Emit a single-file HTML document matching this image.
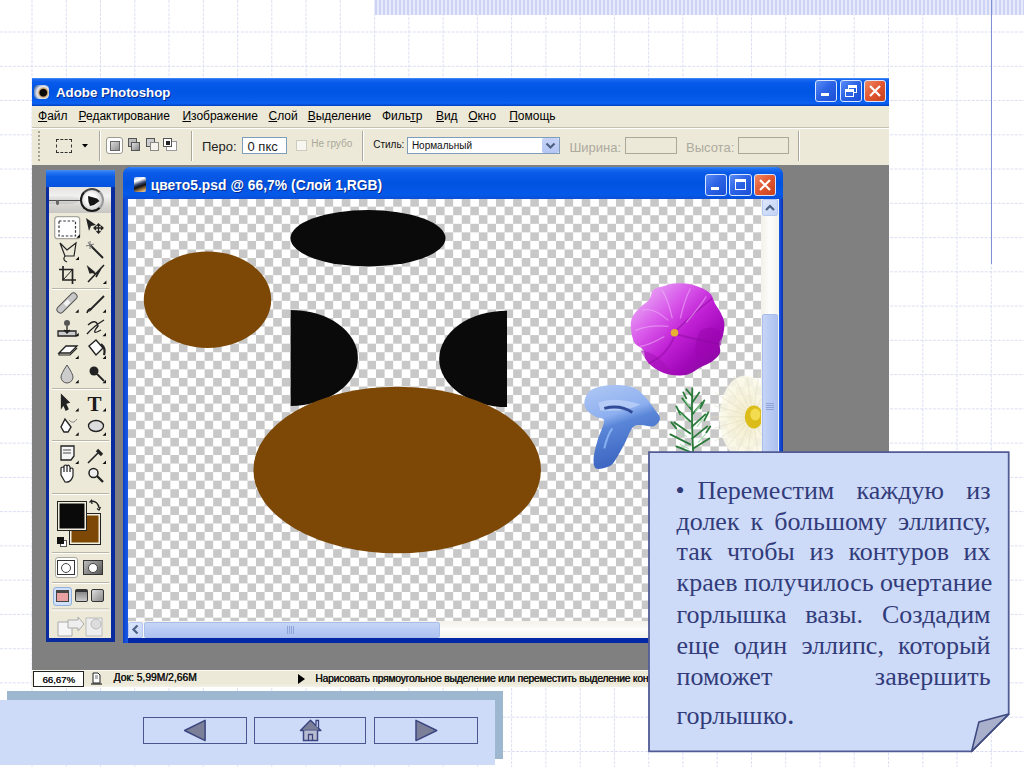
<!DOCTYPE html>
<html><head><meta charset="utf-8">
<style>
*{margin:0;padding:0;box-sizing:border-box}
html,body{width:1024px;height:767px;overflow:hidden;background:#fff;position:relative;font-family:"Liberation Sans",sans-serif}
.a{position:absolute}
.t{position:absolute;white-space:nowrap}
#grid line{stroke:#dcdff3;stroke-width:1;stroke-dasharray:3 1.3}
.mi{position:absolute;top:31.6px;font-size:12px;line-height:12px;color:#000;white-space:nowrap}
.mi u{text-decoration:underline;text-underline-offset:1px}
.xpb{position:absolute;width:22px;height:22px;border:1px solid #d8e6ff;border-radius:3px;background:linear-gradient(135deg,#5a8cf5 0%,#2d64e6 45%,#1a4fd6 100%)}
.xpc{background:linear-gradient(135deg,#f08a66 0%,#e0552f 50%,#c8421c 100%)}
.sep{position:absolute;width:1px;background:#aca899;border-right:1px solid #fff;width:2px}
</style></head><body>
<svg id="grid" class="a" style="left:0;top:0" width="1024" height="767">
<line x1="32.0" y1="0" x2="32.0" y2="767"/>
<line x1="66.3" y1="0" x2="66.3" y2="767"/>
<line x1="100.5" y1="0" x2="100.5" y2="767"/>
<line x1="134.8" y1="0" x2="134.8" y2="767"/>
<line x1="169.0" y1="0" x2="169.0" y2="767"/>
<line x1="203.3" y1="0" x2="203.3" y2="767"/>
<line x1="237.6" y1="0" x2="237.6" y2="767"/>
<line x1="271.8" y1="0" x2="271.8" y2="767"/>
<line x1="306.1" y1="0" x2="306.1" y2="767"/>
<line x1="340.3" y1="0" x2="340.3" y2="767"/>
<line x1="374.6" y1="0" x2="374.6" y2="767"/>
<line x1="408.9" y1="0" x2="408.9" y2="767"/>
<line x1="443.1" y1="0" x2="443.1" y2="767"/>
<line x1="477.4" y1="0" x2="477.4" y2="767"/>
<line x1="511.6" y1="0" x2="511.6" y2="767"/>
<line x1="545.9" y1="0" x2="545.9" y2="767"/>
<line x1="580.2" y1="0" x2="580.2" y2="767"/>
<line x1="614.4" y1="0" x2="614.4" y2="767"/>
<line x1="648.7" y1="0" x2="648.7" y2="767"/>
<line x1="682.9" y1="0" x2="682.9" y2="767"/>
<line x1="717.2" y1="0" x2="717.2" y2="767"/>
<line x1="751.5" y1="0" x2="751.5" y2="767"/>
<line x1="785.7" y1="0" x2="785.7" y2="767"/>
<line x1="820.0" y1="0" x2="820.0" y2="767"/>
<line x1="854.2" y1="0" x2="854.2" y2="767"/>
<line x1="888.5" y1="0" x2="888.5" y2="767"/>
<line x1="922.8" y1="0" x2="922.8" y2="767"/>
<line x1="957.0" y1="0" x2="957.0" y2="767"/>
<line x1="991.3" y1="0" x2="991.3" y2="767"/>
<line x1="0" y1="32.0" x2="1024" y2="32.0"/>
<line x1="0" y1="66.3" x2="1024" y2="66.3"/>
<line x1="0" y1="100.5" x2="1024" y2="100.5"/>
<line x1="0" y1="134.8" x2="1024" y2="134.8"/>
<line x1="0" y1="169.0" x2="1024" y2="169.0"/>
<line x1="0" y1="203.3" x2="1024" y2="203.3"/>
<line x1="0" y1="237.6" x2="1024" y2="237.6"/>
<line x1="0" y1="271.8" x2="1024" y2="271.8"/>
<line x1="0" y1="306.1" x2="1024" y2="306.1"/>
<line x1="0" y1="340.3" x2="1024" y2="340.3"/>
<line x1="0" y1="374.6" x2="1024" y2="374.6"/>
<line x1="0" y1="408.9" x2="1024" y2="408.9"/>
<line x1="0" y1="443.1" x2="1024" y2="443.1"/>
<line x1="0" y1="477.4" x2="1024" y2="477.4"/>
<line x1="0" y1="511.6" x2="1024" y2="511.6"/>
<line x1="0" y1="545.9" x2="1024" y2="545.9"/>
<line x1="0" y1="580.2" x2="1024" y2="580.2"/>
<line x1="0" y1="614.4" x2="1024" y2="614.4"/>
<line x1="0" y1="648.7" x2="1024" y2="648.7"/>
<line x1="0" y1="682.9" x2="1024" y2="682.9"/>
<line x1="0" y1="717.2" x2="1024" y2="717.2"/>
<line x1="0" y1="751.5" x2="1024" y2="751.5"/>
</svg>
<div class="a" id="band" style="left:374px;top:0;width:650px;height:15px;background:radial-gradient(circle,#c9d0f3 0.9px,transparent 1.4px) 0 0/4px 2.6px,#e7eafa"></div>
<div class="a" style="left:991.1px;top:0;width:1.3px;height:264px;background:#7f8fd4"></div>

<!-- Photoshop window -->
<div class="a" id="ps" style="left:32px;top:78px;width:857px;height:609.2px;background:#ece9d8">
  <div class="a" id="title" style="left:0;top:0;width:857px;height:28px;background:linear-gradient(#4a92f8 0,#1a68ee 1.5px,#0659ea 5px,#0055e4 50%,#075cec 82%,#0c62f2 90%,#0040c0 100%)">
    <div class="a" style="left:2.2px;top:6.6px;width:14.6px;height:14px;border-radius:30%;background:radial-gradient(circle at 62% 55%,#0a0a0a 0 28%,#c8a070 36%,#e8ecf4 52%,#8aa0c8 70%,#203060 100%)"></div>
    <div class="t" style="left:24px;top:8.2px;font:bold 13.3px/13px 'Liberation Sans',sans-serif;color:#fff;text-shadow:1px 1px 0 #0a2a8a;letter-spacing:0px">Adobe Photoshop</div>
    <div class="xpb" style="left:783px;top:2px"><div class="a" style="left:5px;top:12px;width:8px;height:3px;background:#fff"></div></div>
    <div class="xpb" style="left:808px;top:2px"><div class="a" style="left:7px;top:4px;width:9px;height:8px;border:1.5px solid #fff;border-top-width:3px"></div><div class="a" style="left:4px;top:8px;width:9px;height:8px;border:1.5px solid #fff;border-top-width:3px;background:#2d64e6"></div></div>
    <div class="xpb xpc" style="left:832px;top:2px"><svg class="a" style="left:3px;top:3px" width="14" height="14"><path d="M2 2L12 12M12 2L2 12" stroke="#fff" stroke-width="2.2"/></svg></div>
  </div>
  <div class="a" id="menubar" style="left:0;top:28px;width:857px;height:21.5px;background:#ece9d8;border-bottom:1px solid #c5c2b2"></div>
  <div class="mi" style="left:6px"><u>Ф</u>айл</div>
  <div class="mi" style="left:46.5px"><u>Р</u>едактирование</div>
  <div class="mi" style="left:150.4px"><u>И</u>зображение</div>
  <div class="mi" style="left:236.5px"><u>С</u>лой</div>
  <div class="mi" style="left:275.7px"><u>В</u>ыделение</div>
  <div class="mi" style="left:350px">Филь<u>т</u>р</div>
  <div class="mi" style="left:403.9px"><u>В</u>ид</div>
  <div class="mi" style="left:436.2px"><u>О</u>кно</div>
  <div class="mi" style="left:477.2px"><u>П</u>омощь</div>

  <div class="a" id="opts" style="left:0;top:50px;width:857px;height:37px;background:#ece9d8;border-top:1px solid #fff"></div>
  <!-- grip -->
  <div class="a" style="left:6px;top:53px;width:2px;height:32px;background:repeating-linear-gradient(#a5a28f 0 2px,transparent 2px 4px)"></div>
  <!-- marquee icon -->
  <div class="a" style="left:24px;top:60.5px;width:16px;height:14px;border:1.5px dashed #333"></div>
  <svg class="a" style="left:50px;top:65.5px" width="6" height="4"><path d="M0 0H6L3 3.5Z" fill="#000"/></svg>
  <div class="sep" style="left:67px;top:53px;height:30px"></div>
  <!-- mode buttons -->
  <div class="a" style="left:74px;top:58.7px;width:17px;height:17.5px;border:1px solid #9b9a90;border-radius:3px;background:#fff"></div>
  <div class="a" style="left:78px;top:62.5px;width:10px;height:10px;background:linear-gradient(135deg,#d8d8d8,#909090);border:1px solid #666"></div>
  <div class="a" style="left:95.5px;top:60px;width:9px;height:9px;background:#bbb;border:1px solid #555"></div>
  <div class="a" style="left:99px;top:64px;width:9px;height:9px;background:linear-gradient(135deg,#ddd,#888);border:1px solid #555"></div>
  <div class="a" style="left:114px;top:60px;width:9px;height:9px;background:#ccc;border:1px solid #555"></div>
  <div class="a" style="left:118px;top:64px;width:9px;height:9px;background:#f4f2ea;border:1px solid #888"></div>
  <div class="a" style="left:134px;top:63px;width:11px;height:10px;background:#fff;border:1px solid #999"></div>
  <div class="a" style="left:131px;top:60px;width:9px;height:9px;background:#fff;border:1px solid #555"></div>
  <div class="a" style="left:133.5px;top:62.5px;width:4px;height:4px;background:#222"></div>
  <div class="sep" style="left:159px;top:53px;height:30px"></div>
  <div class="t" style="left:170px;top:62px;font-size:13px;line-height:13px;color:#222">Перо:</div>
  <div class="a" style="left:210.3px;top:59.1px;width:44.5px;height:16.8px;background:#fff;border:1px solid #7f9db9"></div>
  <div class="t" style="left:215.5px;top:61.8px;font-size:13px;line-height:13px;color:#222">0 пкс</div>
  <div class="a" style="left:264.2px;top:62.2px;width:11px;height:10.5px;background:#f7f6f0;border:1px solid #cfccbe"></div>
  <div class="t" style="left:279.2px;top:61.3px;font-size:10px;line-height:10px;color:#aaa89a">Не грубо</div>
  <div class="sep" style="left:330px;top:53px;height:30px"></div>
  <div class="t" style="left:341.2px;top:62.2px;font-size:10px;line-height:10px;color:#111">Стиль:</div>
  <div class="a" style="left:375px;top:59.1px;width:153px;height:16.8px;background:#fff;border:1px solid #7f9db9"></div>
  <div class="t" style="left:379.9px;top:62.8px;font-size:10px;line-height:10px;color:#111">Нормальный</div>
  <div class="a" style="left:510px;top:60.3px;width:16.5px;height:14.5px;background:linear-gradient(#c6d3f7,#b5c6f4);border-radius:2px"></div>
  <svg class="a" style="left:513px;top:63.5px" width="11" height="8"><path d="M1.5 1.5L5.5 5.5L9.5 1.5" stroke="#4d6185" stroke-width="2.2" fill="none"/></svg>
  <div class="t" style="left:537.4px;top:63.3px;font-size:13px;line-height:13px;color:#adaa9f">Ширина:</div>
  <div class="a" style="left:593.2px;top:58.7px;width:51.5px;height:17px;border:1px solid #aaa89a"></div>
  <div class="t" style="left:654px;top:63.3px;font-size:13px;line-height:13px;color:#adaa9f">Высота:</div>
  <div class="a" style="left:706.1px;top:58.7px;width:51.1px;height:17px;border:1px solid #aaa89a"></div>
  <div class="sep" style="left:765.5px;top:53px;height:30px"></div>

  <div class="a" id="work" style="left:0;top:87px;width:857px;height:504.5px;background:#808080"></div>
  <div class="a" id="status" style="left:0;top:591.6px;width:857px;height:17.6px;background:linear-gradient(#faf9f2 0,#faf9f2 1px,#ece9d8 1.5px,#ece9d8 80%,#f3f1e6 100%)"></div>
  <div class="a" style="left:0.5px;top:592.8px;width:51px;height:16.5px;background:#fff;border:1.5px solid #222"></div>
  <div class="t" style="left:10.5px;top:597.3px;font-size:9.6px;line-height:10px;color:#111;text-shadow:0.2px 0 0 #111">66,67%</div>
  <div class="t" style="left:81.5px;top:595.1px;font-size:10.3px;line-height:10px;color:#111;text-shadow:0.35px 0 0 #111">Док: 5,99M/2,66M</div>
  <svg class="a" style="left:57px;top:594px" width="14" height="14"><path d="M4 1H9L11 3V11H4Z" fill="#fff" stroke="#222" stroke-width="1"/><path d="M2 12H13" stroke="#222" stroke-width="1.2"/><path d="M6 4H9M6 6H9" stroke="#444" stroke-width=".8"/></svg>
  <svg class="a" style="left:265.6px;top:596.4px" width="8" height="11"><path d="M0 0L7 5L0 10Z" fill="#000"/></svg>
  <div class="t" style="left:283.2px;top:595.5px;font-size:10.3px;line-height:10px;color:#111;text-shadow:0.35px 0 0 #111;letter-spacing:-0.22px">Нарисовать прямоугольное выделение или переместить выделение контура</div>
</div>

<!-- Toolbox -->
<div class="a" id="tools" style="left:46px;top:169.5px;width:68.6px;height:472.5px;background:#0a2b9e">
  <div class="a" style="left:0;top:0;width:68.6px;height:17.5px;background:linear-gradient(#4a90f6 0,#2a78f2 2px,#0a5ce8 40%,#0552de 100%)"></div>
  <div class="a" style="left:3.4px;top:17.5px;width:62px;height:451px;background:#ece9d8"></div>
  <!-- header image -->
  <div class="a" style="left:3.4px;top:17.5px;width:62px;height:25.5px;background:linear-gradient(180deg,#e4e2de,#f2f2f2 35%,#d8d6d2 70%,#c8c6c2);overflow:hidden">
    <div class="a" style="left:0;top:9px;width:30px;height:8px;background:linear-gradient(#e8e8e8,#bdbdbd);opacity:.7;border-radius:0 40% 40% 0"></div>
    <div class="a" style="left:0;top:12.5px;width:33px;height:1.2px;background:#505050"></div>
    <div class="a" style="left:7px;top:13px;width:3px;height:5px;background:#666;border-radius:40%"></div>
    <div class="a" style="left:30.5px;top:0.5px;width:24px;height:24px;border-radius:50%;border:2.4px solid #1a1a1a;border-right-color:#9a9a9a;border-top-color:#444;background:radial-gradient(circle at 45% 45%,#fafafa 0 35%,#c4c4c4 80%)"></div>
    <svg class="a" style="left:38px;top:7px" width="14" height="13"><path d="M1 2L10 4.5L12.5 7L7 11L3 12L1.5 8Z" fill="#141414"/></svg>
  </div>
</div>
<svg class="a" id="toolicons" style="left:46px;top:169.5px" width="69" height="473" fill="none" stroke="#222" stroke-width="1.3">
  <!-- separators (abs y minus 169.5) -->
  <path d="M6 118.5H63M6 218.5H63M6 270.5H63M6 323.5H63M6 382.5H63M6 412.5H63M6 439H63" stroke="#b9b6a6" stroke-width="1"/>
  <path d="M6 119.5H63M6 219.5H63M6 271.5H63M6 324.5H63M6 383.5H63M6 413.5H63M6 440H63" stroke="#fff" stroke-width="1"/>
  <!-- selected marquee button -->
  <rect x="8.7" y="46.7" width="25" height="22" rx="3" fill="#fff" stroke="#a8a79c"/>
  <rect x="13" y="51" width="16.5" height="15" stroke="#333" stroke-dasharray="2.5 1.8" stroke-width="1.2"/>
  <!-- move tool -->
  <path d="M40 48L50 55L45 56L43 61Z" fill="#222" stroke="none"/>
  <path d="M48 58H57M52.5 54V63M55 56L57 58L55 60M50 56L48 58L50 60M50.5 56L52.5 54L54.5 56M50.5 61L52.5 63L54.5 61" stroke-width="1.3"/>
  <!-- lasso -->
  <path d="M14 73L21 80L30 73L28 86L19 86Z" stroke-width="1.2"/>
  <path d="M19 86Q16 90 21 92" stroke-width="1.2"/>
  <!-- magic wand -->
  <path d="M44 75L57 88" stroke-width="2"/>
  <path d="M42 72L46 78M40 76L48 74M44 71V79" stroke="#777" stroke-width="1"/>
  <!-- crop -->
  <path d="M17 96V110H30M13 99.5H26.5V114" stroke-width="1.7"/>
  <path d="M17 110L27 99" stroke-width="1"/>
  <!-- slice -->
  <path d="M42 112L58 95M44 101L50 104M50 107L55 98" stroke-width="1.6"/>
  <path d="M42 97L48 102L44 103Z" fill="#222"/>
  <!-- healing -->
  <path d="M14.5 139.5L27.5 126.5" stroke="#555" stroke-width="8" stroke-linecap="round"/>
  <path d="M14.5 139.5L27.5 126.5" stroke="#c8c8c8" stroke-width="6" stroke-linecap="round"/>
  <path d="M19 135L23 131" stroke="#f4f4f4" stroke-width="4"/>
  <!-- brush -->
  <path d="M43 141L58 126" stroke-width="1.8"/>
  <path d="M41 143Q42 138 46 139" fill="#444" stroke-width="1.5"/>
  <!-- stamp -->
  <circle cx="21" cy="153" r="3" fill="#555" stroke="none"/>
  <path d="M21 156V160M12 161H30V166H12Z" fill="#ccc" stroke-width="1.3"/>
  <path d="M18 160L21 163L24 160" fill="#222"/>
  <!-- history brush -->
  <path d="M42 155Q50 148 52 156Q44 166 55 160M41 164Q48 156 58 150" stroke-width="1.4"/>
  <!-- eraser -->
  <path d="M13 183L20 176H31L24 183Z" fill="#fff" stroke-width="1.3"/>
  <path d="M13 183V185H24L31 178" stroke-width="1.1"/>
  <!-- bucket -->
  <path d="M43 176L50 170L57 178L50 185Z" fill="#fff" stroke-width="1.4"/>
  <path d="M55 174Q60 178 58 185" stroke-width="2.2"/>
  <!-- blur drop -->
  <path d="M21 195Q15 204 15 207A6 6 0 0 0 27 207Q27 204 21 195Z" fill="#ccc" stroke="#555" stroke-width="1"/>
  <!-- dodge -->
  <circle cx="48" cy="201" r="4.5" fill="#222" stroke="none"/>
  <path d="M51 204L58 211" stroke-width="1.8"/>
  <!-- path selection -->
  <path d="M15.5 225L23 232.5L19.5 233.5L22 239L20 240L17.5 234.5L15.5 237.5Z" fill="#222"/>
  <!-- type -->
  <text x="48.5" y="240.5" text-anchor="middle" font-family="Liberation Serif" font-size="21" font-weight="bold" fill="#1a1a1a" stroke="none">T</text>
  <!-- pen -->
  <path d="M19 249L15 257L18 262H22L25 257Z" fill="#fff" stroke-width="1.4"/>
  <path d="M23 250Q27 255 31 249" stroke-width="1" stroke="#888"/>
  <!-- ellipse -->
  <ellipse cx="50" cy="256" rx="7.5" ry="5.5" fill="#ddd" stroke-width="1.3"/>
  <!-- notes -->
  <path d="M15 276H28V286L25 290H15Z" fill="#f6f6f6" stroke-width="1.3"/>
  <path d="M17 280H25M17 283H25" stroke-width="0.8"/>
  <!-- eyedropper -->
  <path d="M42 293L52 283" stroke-width="1.6"/>
  <path d="M51 280L56 285" stroke-width="3.2"/>
  <!-- hand -->
  <path d="M15 305V298Q17 296 18 298V302V296Q20 294 21 296V302V296Q23 294 24 297V302V299Q26 297 27 299V306Q25 313 19 312Z" fill="#fff" stroke-width="1.2"/>
  <!-- zoom -->
  <circle cx="47.5" cy="303" r="4.5" fill="#eee" stroke-width="1.5"/>
  <path d="M51 306L57 312" stroke-width="2.4"/>
  <!-- small corner triangles -->
  <g fill="#111" stroke="none">
    <path d="M33.9 64.3V67.8H30.4ZM33.0 86.4V89.9H29.5ZM60.4 110.5V114.0H56.9ZM32.7 139.3V142.8H29.2ZM60.0 139.3V142.8H56.5ZM32.7 162.8V166.3H29.2ZM60.0 162.8V166.3H56.5ZM32.7 185.5V189.0H29.2ZM60.0 185.5V189.0H56.5ZM32.7 209.7V213.2H29.2ZM60.0 209.7V213.2H56.5ZM32.7 238.0V241.5H29.2ZM60.0 238.0V241.5H56.5ZM32.7 262.3V265.8H29.2ZM60.0 262.3V265.8H56.5ZM32.7 290.5V294.0H29.2ZM60.0 290.5V294.0H56.5Z"/>
  </g>
</svg>
<!-- color swatches -->
<div class="a" style="left:69px;top:513.3px;width:32.3px;height:31.3px;background:#7d4806;border:1px solid #222;box-shadow:inset 0 0 0 1.5px #f4f0e0"></div>
<div class="a" style="left:56.9px;top:500.8px;width:29.8px;height:29.8px;background:#0a0a0a;border:1px solid #222;box-shadow:inset 0 0 0 1.5px #f4f0e0"></div>
<div class="a" style="left:59.5px;top:540px;width:7px;height:7px;background:#fff;border:1px solid #555"></div>
<div class="a" style="left:56.5px;top:537px;width:7px;height:7px;background:#111"></div>
<svg class="a" style="left:88px;top:499px" width="14" height="13" fill="none" stroke="#222" stroke-width="1.3"><path d="M3 2Q10 2 11 9M1.5 3.5L3.5 1.5L4 5M9 9.5L11 11L12.5 8"/></svg>
<!-- quick mask -->
<div class="a" style="left:54.8px;top:557.1px;width:23px;height:20.5px;background:#fff;border:1px solid #a8a79c;border-radius:3px"></div>
<div class="a" style="left:57.3px;top:560px;width:18px;height:14.5px;background:#fff;border:1.5px solid #333"></div>
<div class="a" style="left:61px;top:562.5px;width:10px;height:10px;border-radius:50%;background:#fff;border:1px solid #444"></div>
<div class="a" style="left:82.6px;top:559.8px;width:20.4px;height:15.7px;background:linear-gradient(135deg,#bbb,#555);border:1px solid #333"></div>
<div class="a" style="left:87.5px;top:562.5px;width:10px;height:10px;border-radius:50%;background:#fff;border:1px solid #444"></div>
<!-- screen modes -->
<div class="a" style="left:53px;top:586.5px;width:19px;height:19px;background:#cfe0f8;border:1px solid #8fb0e0;border-radius:3px"></div>
<div class="a" style="left:56px;top:589.5px;width:13px;height:12px;background:#e8a0a0;border:1px solid #444;border-top-width:3px"></div>
<div class="a" style="left:74.5px;top:588.5px;width:13px;height:13px;background:linear-gradient(#888,#ccc);border:1px solid #333;border-top-width:3px;border-radius:2px"></div>
<div class="a" style="left:90.5px;top:588.5px;width:13px;height:13px;background:linear-gradient(135deg,#ddd,#888);border:1px solid #333;border-radius:2px"></div>
<!-- jump to IR -->
<svg class="a" style="left:54px;top:612px" width="52" height="26"><path d="M4 10H18V24H4Z" fill="#f6f6f6" stroke="#aaa"/><path d="M14 8L24 8V5L30 12L24 19V16H14Z" fill="#eee" stroke="#aaa"/><path d="M32 6H48V24H32Z" fill="#eee" stroke="#bbb"/><circle cx="42" cy="12" r="5" fill="#ddd" stroke="#bbb"/></svg>

<!-- Document window -->
<div class="a" id="doc" style="left:123.2px;top:167px;width:659.8px;height:475.7px;background:#0846d8;border-radius:8px 8px 0 0;overflow:hidden">
  <div class="a" style="left:0;top:0;width:659.8px;height:31.6px;background:linear-gradient(#3b8cf6 0,#1a6cf0 2px,#0a5ae8 6px,#0053e0 50%,#0559ea 85%,#0a4fd8 100%)"></div>
  <div class="a" style="left:0;top:470.7px;width:659.8px;height:5px;background:#0228a8"></div>
  <div class="a" style="left:0;top:31.6px;width:4.5px;height:444px;background:linear-gradient(90deg,#0a3fc8,#1a5ae8)"></div>
  <div class="a" style="left:655.4px;top:31.6px;width:4.4px;height:444px;background:linear-gradient(90deg,#1a5ae8,#0a30b0)"></div>
  <div class="a" style="left:10.7px;top:9.7px;width:12px;height:15px;border-radius:2px;background:linear-gradient(160deg,#b8c8f0 0,#fff 25%,#3a4a70 45%,#111 60%,#c89858 85%,#f0e0c0 100%)"></div>
  <div class="t" style="left:27.5px;top:12.4px;font:bold 13.8px/13px 'Liberation Sans',sans-serif;color:#fff;text-shadow:1px 1px 0 #0a2a8a;letter-spacing:0.05px">цвето5.psd @ 66,7% (Слой 1,RGB)</div>
  <div class="xpb" style="left:581.8px;top:6.6px;width:22px;height:22px"><div class="a" style="left:5px;top:12.5px;width:8px;height:3px;background:#fff"></div></div>
  <div class="xpb" style="left:606px;top:6.6px;width:22.6px;height:22px"><div class="a" style="left:4.5px;top:4px;width:11px;height:11px;border:1.5px solid #fff;border-top-width:3px"></div></div>
  <div class="xpb xpc" style="left:631px;top:6.6px;width:22.3px;height:22px"><svg class="a" style="left:3px;top:3px" width="14" height="14"><path d="M2 2L12 12M12 2L2 12" stroke="#fff" stroke-width="2.2"/></svg></div>
</div>
<div class="a" id="canvas" style="left:127.7px;top:198.6px;width:633.3px;height:422.4px;background:conic-gradient(#c8c8c8 25%,#fff 0 50%,#c8c8c8 0 75%,#fff 0) -0.5px -0.9px/17.15px 17.13px;overflow:hidden">
  <svg class="a" style="left:0;top:0" width="634" height="423">
   <g transform="translate(-127.7,-198.6)">
    <ellipse cx="367.7" cy="237.9" rx="77.5" ry="28.2" fill="#0a0a0a"/>
    <ellipse cx="207.2" cy="299.3" rx="63.7" ry="48.3" fill="#7d4806"/>
    <path d="M290.3 309.5A67.3 48 0 0 1 290.3 405.5Z" fill="#0a0a0a"/>
    <path d="M506.7 310.3A67.8 48.2 0 0 0 506.7 406.7Z" fill="#0a0a0a"/>
    <ellipse cx="396.9" cy="469.6" rx="143.8" ry="83.3" fill="#7d4806"/>
    <defs>
      <linearGradient id="pg" x1="0.1" y1="0.1" x2="0.9" y2="0.9"><stop offset="0" stop-color="#eaa8f6"/><stop offset=".3" stop-color="#d858ea"/><stop offset=".55" stop-color="#c020d4"/><stop offset=".8" stop-color="#a008b8"/><stop offset="1" stop-color="#8a0aa0"/></linearGradient>
      <linearGradient id="bg" x1="0" y1="0" x2="0.3" y2="1"><stop offset="0" stop-color="#b0c8f4"/><stop offset=".42" stop-color="#8eb0f0"/><stop offset=".55" stop-color="#5a86d8"/><stop offset="1" stop-color="#3a64c0"/></linearGradient>
      <radialGradient id="dg" cx=".5" cy=".5" r=".5"><stop offset="0" stop-color="#f2ecc8"/><stop offset="1" stop-color="#fbf9ea" stop-opacity=".85"/></radialGradient>
    </defs>
    <path d="M663.0 285.8C667.1 284.7 672.1 283.0 677.4 282.9C682.7 282.8 689.3 283.4 694.6 285.0C699.9 286.6 705.6 289.2 709.0 292.2C712.4 295.2 712.8 299.6 714.7 303.0C716.6 306.4 718.9 309.1 720.4 312.3C721.9 315.5 723.6 318.5 724.0 322.3C724.4 326.1 723.4 332.0 722.6 335.3C721.8 338.6 719.5 339.5 719.0 342.4C718.5 345.3 720.9 349.4 719.7 352.5C718.5 355.6 715.0 358.6 711.8 361.0C708.6 363.4 704.4 364.6 700.3 366.8C696.2 369.0 692.2 372.7 687.4 374.0C682.6 375.3 676.6 375.4 671.6 374.7C666.6 374.0 661.6 372.2 657.3 369.7C653.0 367.2 648.2 363.0 645.8 359.6C643.4 356.2 644.9 352.5 643.0 349.6C641.1 346.7 636.3 345.8 634.3 342.4C632.3 339.0 631.3 333.6 630.8 329.5C630.3 325.4 630.2 321.6 631.5 318.0C632.8 314.4 635.8 311.1 638.7 308.0C641.6 304.9 646.3 302.5 648.7 299.4C651.1 296.3 650.6 291.6 653.0 289.3C655.4 287.0 658.9 286.9 663.0 285.8Z" fill="url(#pg)"/>
    <path d="M700 330Q716 322 722 336Q720 356 700 366Q690 350 700 330Z" fill="#9a06ae" opacity=".55"/>
    <path d="M640 350Q660 352 672 374Q652 372 640 350Z" fill="#a010b4" opacity=".5"/>
    <g stroke="#8a0a9e" stroke-width="1.6" fill="none" opacity=".5">
      <path d="M676 330Q694 312 712 298M676 334Q700 340 721 344M674 336Q666 356 648 363"/>
    </g>
    <g stroke="#f0b8f8" stroke-width="1.2" fill="none" opacity=".55">
      <path d="M668 320Q652 306 642 310M668 326Q650 324 635 330M680 318Q684 300 690 288M672 318Q668 300 662 290M686 322Q700 306 706 296M664 336Q650 344 640 346"/>
    </g>
    <circle cx="674.2" cy="332.4" r="3.8" fill="#e8b030"/>
    <path d="M584.1 401.0C584.5 397.7 586.5 393.1 589.3 390.6C592.1 388.1 595.8 387.0 601.0 386.0C606.2 385.0 614.9 384.5 620.6 384.8C626.3 385.1 630.9 385.9 635.0 388.0C639.1 390.1 642.1 393.7 645.4 397.2C648.6 400.7 652.1 405.5 654.5 409.0C656.9 412.5 659.9 415.2 659.7 418.0C659.5 420.8 656.5 424.7 653.2 425.8C650.0 426.9 643.7 424.3 640.2 424.5C636.7 424.7 635.0 424.1 632.4 427.2C629.8 430.2 627.5 437.2 624.5 442.8C621.5 448.4 616.9 457.1 614.1 461.0C611.3 464.9 610.6 465.1 607.6 466.3C604.6 467.5 598.3 469.5 595.9 468.2C593.5 466.9 593.1 463.1 593.3 458.4C593.5 453.7 595.5 446.5 597.2 440.2C598.9 433.9 603.9 424.5 603.7 420.6C603.5 416.7 598.7 418.4 595.9 416.7C593.1 415.0 588.7 412.8 586.7 410.2C584.7 407.6 583.7 404.3 584.1 401.0Z" fill="url(#bg)"/>
    <path d="M598 402Q615 396 640 404Q625 412 600 410Z" fill="#c0d4f8" opacity=".7"/>
    <path d="M604 408Q620 404 632 412" stroke="#304c98" stroke-width="3" fill="none"/>
    <path d="M604 448Q607 435 612 428" stroke="#88b0f0" stroke-width="2" fill="none"/>
    <g stroke="#2a7a3a" stroke-width="1.8" fill="none" stroke-linecap="round">
      <path d="M692 388Q691 420 693 455"/>
      <path d="M692 396L686 389M692 402L699 392M691 409L682 398M692 414L702 402M690 421L678 410M692 426L705 414M690 433L674 422M692 438L707 426M690 444L670 434M693 448L709 438M691 452L676 446M686 398L683 392M700 408L704 400M680 414L676 406M704 420L708 412M676 428L671 422M706 432L710 426"/>
    </g>
    <g stroke="#9ad8a4" stroke-width="1.1" fill="none" opacity=".85" stroke-linecap="round">
      <path d="M689 406L684 399M695 411L700 404M687 420L680 413M697 426L703 418M686 436L677 430M698 442L705 434M688 448L680 444"/>
    </g>
    <ellipse cx="745" cy="417" rx="26" ry="42" fill="url(#dg)"/>
    <path d="M760.5 416.5L792.5 416.5M760.2 418.8L795.7 429.2M759.2 420.8L786.2 438.1M757.7 422.5L782.0 450.5M755.8 423.8L769.1 452.9M753.6 424.4L758.9 461.0M751.4 424.4L746.8 456.1M749.2 423.8L733.8 457.4M747.3 422.5L726.3 446.7M745.8 420.8L714.6 440.8M744.8 418.8L714.1 427.8M744.5 416.5L707.5 416.5M744.8 414.2L714.1 405.2M745.8 412.2L714.6 392.2M747.3 410.5L726.3 386.3M749.2 409.2L733.8 375.6M751.4 408.6L746.8 376.9M753.6 408.6L758.9 372.0M755.8 409.2L769.1 380.1M757.7 410.5L782.0 382.5M759.2 412.2L786.2 394.9M760.2 414.2L795.7 403.8" stroke="#e2ddc4" stroke-width="1" opacity=".55"/>
    <ellipse cx="753.5" cy="416.5" rx="9" ry="11.5" fill="#dcbc18"/>
    <ellipse cx="755" cy="414" rx="5" ry="6" fill="#f4dc50"/>

   </g>
  </svg>
</div>

<!-- scrollbars -->
<div class="a" style="left:761px;top:198.6px;width:17.6px;height:422.4px;background:linear-gradient(90deg,#f3f1ea,#fdfdfb 50%,#f3f2ec)"></div>
<div class="a" style="left:761.5px;top:199px;width:16.5px;height:17px;background:linear-gradient(135deg,#dde7fb,#c3d3f6);border:1px solid #b7c9f2;border-radius:2px"></div>
<svg class="a" style="left:764px;top:203px" width="12" height="9"><path d="M2 7L6 3L10 7" stroke="#4d6185" stroke-width="2.2" fill="none"/></svg>
<div class="a" style="left:761.5px;top:314px;width:16.5px;height:190px;background:linear-gradient(90deg,#c6d5f7,#b9cbf4 50%,#aec2f0);border:1px solid #a9bdea;border-radius:2px"></div>
<div class="a" style="left:765.5px;top:403px;width:8px;height:7px;background:repeating-linear-gradient(#8ea4d8 0 1px,transparent 1px 2px)"></div>
<div class="a" style="left:127.7px;top:621px;width:651px;height:16.7px;background:linear-gradient(#f3f1ea,#fdfdfb 50%,#f3f2ec)"></div>
<div class="a" style="left:128px;top:621.5px;width:15px;height:16px;background:linear-gradient(135deg,#dde7fb,#c3d3f6);border:1px solid #b7c9f2;border-radius:2px"></div>
<svg class="a" style="left:131px;top:624px" width="9" height="11"><path d="M6.5 1.5L2.5 5.5L6.5 9.5" stroke="#4d6185" stroke-width="2.2" fill="none"/></svg>
<div class="a" style="left:143.5px;top:621.5px;width:296.3px;height:16px;background:linear-gradient(#c6d5f7,#b9cbf4 50%,#aec2f0);border:1px solid #a9bdea;border-radius:2px"></div>
<div class="a" style="left:287px;top:625.5px;width:7px;height:8px;background:repeating-linear-gradient(90deg,#8ea4d8 0 1px,transparent 1px 2px)"></div>

<!-- Nav panel -->
<div class="a" style="left:6.5px;top:691.4px;width:496.2px;height:68.1px;background:#9cb7cf"></div>
<div class="a" style="left:0;top:700.3px;width:494.8px;height:65.2px;background:#cddaf8"></div>
<div class="a" style="left:143.2px;top:717.3px;width:103.6px;height:26.4px;border:1.5px solid #4a5690"></div>
<div class="a" style="left:254.4px;top:717.3px;width:112.1px;height:26.4px;border:1.5px solid #4a5690"></div>
<div class="a" style="left:374.2px;top:717.3px;width:103.6px;height:26.4px;border:1.5px solid #4a5690"></div>
<svg class="a" style="left:0;top:700px" width="495" height="66">
  <path d="M184.6 30.5L205.1 20.3V40.6Z" fill="#7b8098" stroke="#3c4680" stroke-width="1.5" stroke-linejoin="round"/>
  <path d="M436.7 30.5L416 20.3V40.6Z" fill="#7b8098" stroke="#3c4680" stroke-width="1.5" stroke-linejoin="round"/>
  <path d="M300.5 30.5L310.5 20.3L320.8 30.5Z" fill="#7b8098" stroke="#3c4680" stroke-width="1.5" stroke-linejoin="round"/>
  <path d="M316 26V20.5H318.5V28" fill="#cddaf8" stroke="#3c4680" stroke-width="1.3"/>
  <path d="M303.5 30.5V40.5H317.5V30.5" fill="#b7bcd0" stroke="#3c4680" stroke-width="1.5"/>
  <path d="M308.5 40.5V34.5H312.5V40.5" fill="none" stroke="#3c4680" stroke-width="1.3"/>
</svg>

<!-- Note card -->
<svg class="a" style="left:640px;top:445px" width="384" height="322">
  <path d="M9 7.2H368.7V269.1L331.6 306.4H9Z" fill="#cddaf8" stroke="#525c94" stroke-width="1.8"/>
  <path d="M331.6 306.4L338.9 276.9L368.7 269.1Z" fill="#a8b0cc" stroke="#3f4a80" stroke-width="1.6" stroke-linejoin="round"/>
</svg>
<div class="a" id="note" style="left:676.5px;top:0;width:314px;font-family:'Liberation Serif',serif;font-size:26px;color:#323c7a">
  <div class="t" style="left:-1px;top:478.2px;line-height:26px">•</div>
  <div class="t" style="left:21px;top:478.2px;width:293px;line-height:26px;text-align:justify;text-align-last:justify">Переместим каждую из</div>
  <div class="t" style="left:0;top:508.8px;width:314px;line-height:26px;text-align:justify;text-align-last:justify">долек к большому эллипсу,</div>
  <div class="t" style="left:0;top:539.3px;width:314px;line-height:26px;text-align:justify;text-align-last:justify">так чтобы из контуров их</div>
  <div class="t" style="left:0;top:570.2px;width:314px;line-height:26px;text-align:justify;text-align-last:justify">краев получилось очертание</div>
  <div class="t" style="left:0;top:602.2px;width:314px;line-height:26px;text-align:justify;text-align-last:justify">горлышка вазы. Создадим</div>
  <div class="t" style="left:0;top:632.7px;width:314px;line-height:26px;text-align:justify;text-align-last:justify">еще один эллипс, который</div>
  <div class="t" style="left:0;top:663.6px;width:314px;line-height:26px;text-align:justify;text-align-last:justify">поможет завершить</div>
  <div class="t" style="left:0;top:702.5px;line-height:26px">горлышко<span style="font-size:30px;line-height:0">.</span></div>
</div>
</body></html>
